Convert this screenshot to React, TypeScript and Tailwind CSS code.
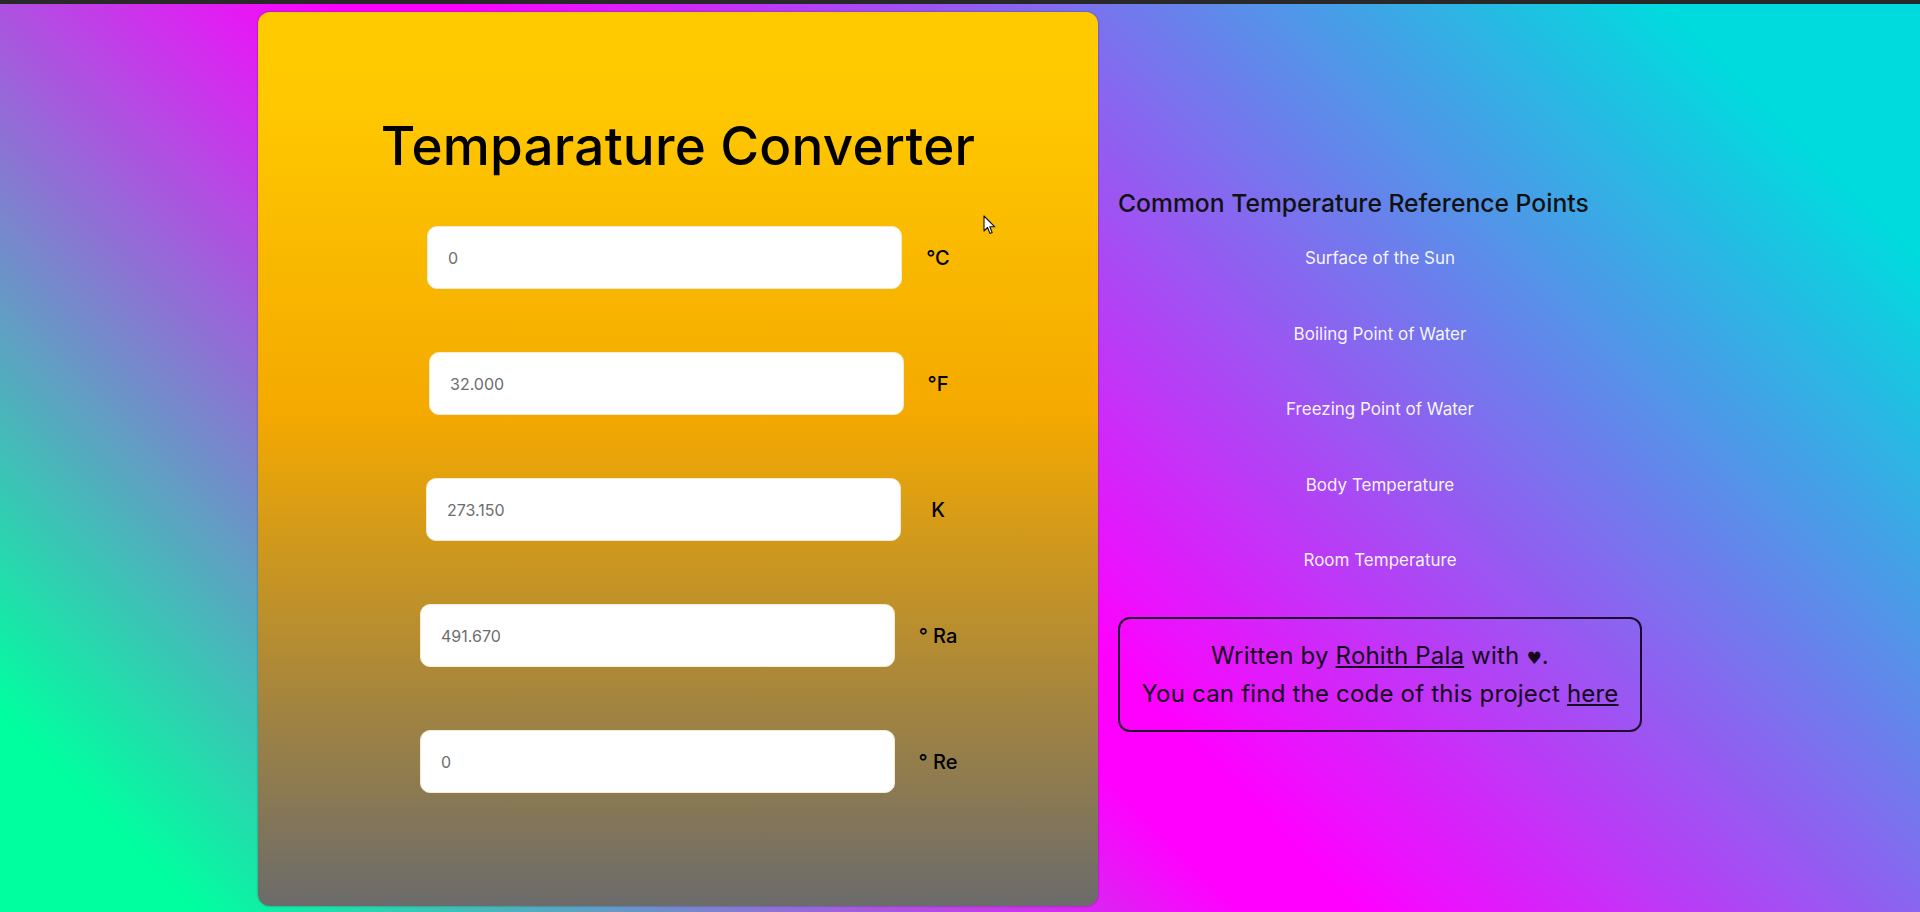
import React from "react";

const rows = [
  { value: "0", unit: "°C", ml: "ml-[9px]" },
  { value: "32.000", unit: "°F", ml: "ml-[11px]" },
  { value: "273.150", unit: "K", ml: "ml-[8px]" },
  { value: "491.670", unit: "° Ra", ml: "ml-[2px]" },
  { value: "0", unit: "° Re", ml: "ml-[2px]" },
];

const refs = [
  "Surface of the Sun",
  "Boiling Point of Water",
  "Freezing Point of Water",
  "Body Temperature",
  "Room Temperature",
];

export default function App() {
  return (
    <div className="w-[1920px] h-[912px] overflow-hidden flex flex-col font-[Inter,'Noto_Sans',sans-serif]">
      <div className="h-[4px] bg-[#292929] shrink-0" />
      <div className="flex-1 flex items-start pl-[258px] pt-[8px] gap-[20px] bg-[linear-gradient(45deg,#00ff9f_7%,#ff00ff_44%,#ff00ff_48%,#00dbde_91%)]">
        <div className="relative w-[840px] h-[894px] rounded-[12px] shadow-[0_0_2px_rgba(0,0,0,0.45)] bg-[linear-gradient(180deg,#ffcb00_0%,#ffc800_10%,#f4a900_45%,#6b6b6b_100%)] pt-[102px]">
          <h1 className="text-center text-[53px] leading-[64px] font-medium text-black tracking-[0.2px]">
            Temparature Converter
          </h1>
          <div className="mt-[48px] pl-[160px] flex flex-col gap-[63px]">
            {rows.map((r, i) => (
              <div key={i} className="flex items-center">
                <div className="w-[490px]">
                  <input
                    readOnly
                    value={r.value}
                    className={`${r.ml} block w-[475px] h-[63px] rounded-[10px] bg-white border border-[#f4ecd2] pl-5 text-[16px] text-[#6d6d6d] outline-none`}
                  />
                </div>
                <div className="w-[60px] text-center text-[20px] font-medium text-black whitespace-pre">
                  {r.unit}
                </div>
              </div>
            ))}
          </div>
          <svg
            className="absolute left-[725px] top-[203px]"
            width="14"
            height="21"
            viewBox="0 0 14 21"
          >
            <path
              d="M1 1 L1 16 L4.5 12.5 L7 18.5 L9.2 17.6 L6.8 11.8 L11.8 11.8 Z"
              fill="#fff"
              stroke="#111"
              strokeWidth="1.1"
              strokeLinejoin="round"
            />
          </svg>
        </div>
        <div className="w-[524px] pt-[173px] flex flex-col">
          <h2 className="text-[24.7px] leading-[36px] font-medium text-[#111]">
            Common Temperature Reference Points
          </h2>
          <div className="mt-[25px] flex flex-col gap-[51.5px]">
            {refs.map((t) => (
              <div key={t} className="text-center text-[17px] leading-[24px] text-white/95">
                {t}
              </div>
            ))}
          </div>
          <div className="mt-[45px] h-[115px] border-2 border-[#22082e] rounded-[12px] flex flex-col justify-center items-center text-[24px] leading-[36px] tracking-[0.2px] text-[#16051c]">
            <div>
              Written by <span className="underline">Rohith Pala</span> with{" "}
              <span className="text-[17px] font-['DejaVu_Sans',sans-serif]">♥</span>.
            </div>
            <div>
              You can find the code of this project <span className="underline">here</span>
            </div>
          </div>
        </div>
      </div>
    </div>
  );
}
